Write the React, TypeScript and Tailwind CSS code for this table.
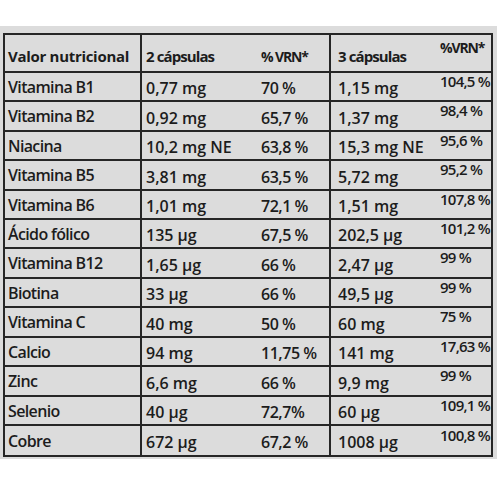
import React from "react";

type Row = { label: string; v2: string; p2: string; v3: string; p3: string; h: string };

const rows: Row[] = [
  { label: "Vitamina B1", v2: "0,77 mg", p2: "70 %", v3: "1,15 mg", p3: "104,5 %", h: "h-[29px]" },
  { label: "Vitamina B2", v2: "0,92 mg", p2: "65,7 %", v3: "1,37 mg", p3: "98,4 %", h: "h-[30px]" },
  { label: "Niacina", v2: "10,2 mg NE", p2: "63,8 %", v3: "15,3 mg NE", p3: "95,6 %", h: "h-[29px]" },
  { label: "Vitamina B5", v2: "3,81 mg", p2: "63,5 %", v3: "5,72 mg", p3: "95,2 %", h: "h-[30px]" },
  { label: "Vitamina B6", v2: "1,01 mg", p2: "72,1 %", v3: "1,51 mg", p3: "107,8 %", h: "h-[29px]" },
  { label: "Ácido fólico", v2: "135 µg", p2: "67,5 %", v3: "202,5 µg", p3: "101,2 %", h: "h-[29px]" },
  { label: "Vitamina B12", v2: "1,65 µg", p2: "66 %", v3: "2,47 µg", p3: "99 %", h: "h-[30px]" },
  { label: "Biotina", v2: "33 µg", p2: "66 %", v3: "49,5 µg", p3: "99 %", h: "h-[29px]" },
  { label: "Vitamina C", v2: "40 mg", p2: "50 %", v3: "60 mg", p3: "75 %", h: "h-[30px]" },
  { label: "Calcio", v2: "94 mg", p2: "11,75 %", v3: "141 mg", p3: "17,63 %", h: "h-[29px]" },
  { label: "Zinc", v2: "6,6 mg", p2: "66 %", v3: "9,9 mg", p3: "99 %", h: "h-[30px]" },
  { label: "Selenio", v2: "40 µg", p2: "72,7%", v3: "60 µg", p3: "109,1 %", h: "h-[29px]" },
  { label: "Cobre", v2: "672 µg", p2: "67,2 %", v3: "1008 µg", p3: "100,8 %", h: "h-[29px]" },
];

export default function App() {
  return (
    <div
      className="w-[500px] h-[500px] bg-white overflow-hidden"
      style={{ fontFamily: '"Open Sans", "Noto Sans", sans-serif' }}
    >
      <div className="mt-[26px] w-[497px] h-[433px] bg-[#dcdcdc] pt-[7px] pl-[3px]">
        <div className="w-[490px] border-2 border-[#262626] text-[#1c1c1c]">
          {/* header */}
          <div className="flex h-[38px] border-b-2 border-[#262626] font-bold text-[15px] tracking-[-0.06em]">
            <div className="w-[137px] shrink-0 border-r-2 border-[#262626] pl-[3px] flex items-center pt-[6px] tracking-[-0.02em]">
              Valor nutricional
            </div>
            <div className="w-[189px] shrink-0 border-r-2 border-[#262626] pl-[4px] flex items-center pt-[6px]">
              <span className="w-[115px] shrink-0">2 cápsulas</span>
              <span className="text-[14px] tracking-[-0.08em]">% VRN*</span>
            </div>
            <div className="flex-1 pl-[7px] flex items-center pt-[6px]">
              <span className="w-[102px] shrink-0">3 cápsulas</span>
              <span className="-translate-y-[9px] text-[14px] tracking-[-0.08em]">%VRN*</span>
            </div>
          </div>
          {rows.map((r, i) => (
            <div
              key={r.label}
              className={`flex ${r.h} text-[16px] font-semibold ${i < rows.length - 1 ? "border-b-2 border-[#262626]" : ""}`}
            >
              <div className="w-[137px] shrink-0 border-r-2 border-[#262626] pl-[3px] flex items-center tracking-[-0.04em]">
                {r.label}
              </div>
              <div className="w-[189px] shrink-0 border-r-2 border-[#262626] pl-[4px] flex items-center pt-[3px]">
                <span className="w-[115px] shrink-0">{r.v2}</span>
                <span className="tracking-[-0.03em]">{r.p2}</span>
              </div>
              <div className="flex-1 pl-[7px] flex items-center pt-[3px]">
                <span className="w-[102px] shrink-0">{r.v3}</span>
                <span className="-translate-y-[7px] text-[15px] tracking-[-0.05em]">{r.p3}</span>
              </div>
            </div>
          ))}
        </div>
      </div>
    </div>
  );
}
